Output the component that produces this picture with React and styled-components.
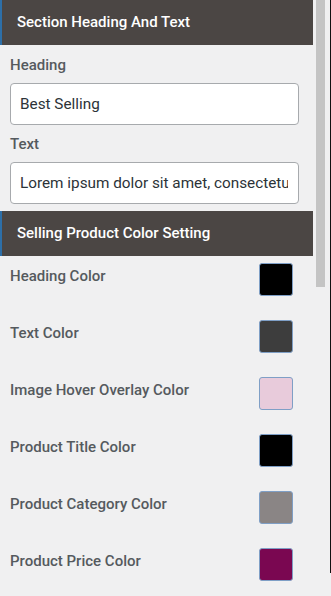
import React from 'react';
import styled, { createGlobalStyle } from 'styled-components';

const GlobalStyle = createGlobalStyle`
    html, body {
        margin: 0;
        padding: 0;
        background: #f0f0f1;
        font-family: Roboto, 'Liberation Sans', sans-serif;
    }
`;

const FrameStyled = styled.div`
    display: flex;
    align-items: flex-start;
    width: 331px;
    height: 596px;
    overflow: hidden;
`;

const PanelStyled = styled.div`
    flex: 0 0 313px;
    display: flex;
    flex-direction: column;
`;

const ScrollTrack = styled.div`
    flex: 0 0 auto;
    width: 9px;
    height: 573px;
    padding: 0 5px 0 3px;
    border-right: 1px solid #111;
`;

const ScrollThumb = styled.div`
    height: 287px;
    background: #c4c4c4;
`;

const SectionHeader = styled.div`
    flex-shrink: 0;
    display: flex;
    align-items: center;
    height: 45px;
    padding: 0 0 1px 15px;
    box-sizing: border-box;
    background: #4b4644;
    border-left: 2px solid #2d6fa8;
    color: #fff;
    font-size: 15px;
    font-weight: 500;
`;

const FieldGroup = styled.div`
    flex-shrink: 0;
    padding: 0 14px 7px 10px;
`;

const FieldLabel = styled.div`
    font-size: 15px;
    line-height: 20px;
    font-weight: 500;
    color: #555a5e;
    margin: ${(p) => (p.$first ? '10px' : '9px')} 0 8px;
`;

const TextInput = styled.input`
    display: block;
    width: 100%;
    height: 42px;
    box-sizing: border-box;
    padding: 0 10px 0 9px;
    border: 1px solid #a7aaad;
    border-radius: 4px;
    background: #fff;
    font-family: Roboto, 'Liberation Sans', sans-serif;
    font-size: 15.3px;
    color: #2c3338;
    outline: none;
`;

const ColorList = styled.div`
    flex-shrink: 0;
    padding: 7px 20px 0 10px;
`;

const ColorRow = styled.div`
    display: flex;
    justify-content: space-between;
    align-items: flex-start;
    height: 57px;
`;

const ColorLabel = styled.span`
    margin-top: 3px;
    font-size: 15px;
    line-height: 20px;
    font-weight: 500;
    color: #555a5e;
`;

const Swatch = styled.div`
    width: 34px;
    height: 33px;
    box-sizing: border-box;
    border: 1px solid #7f9fc6;
    border-radius: 3px;
    background: ${(p) => p.$color};
`;

const colors = [
    { label: 'Heading Color', value: '#000000' },
    { label: 'Text Color', value: '#3d3d3d' },
    { label: 'Image Hover Overlay Color', value: '#e8cbdb' },
    { label: 'Product Title Color', value: '#000000' },
    { label: 'Product Category Color', value: '#8a8585' },
    { label: 'Product Price Color', value: '#7a0751' },
];

export default function App() {
    return (
        <>
            <GlobalStyle />
            <FrameStyled>
                <PanelStyled>
                    <SectionHeader>Section Heading And Text</SectionHeader>
                    <FieldGroup>
                        <FieldLabel $first>Heading</FieldLabel>
                        <TextInput readOnly value="Best Selling" />
                        <FieldLabel>Text</FieldLabel>
                        <TextInput
                            readOnly
                            value="Lorem ipsum dolor sit amet, consectetur adipiscing elit"
                        />
                    </FieldGroup>
                    <SectionHeader>Selling Product Color Setting</SectionHeader>
                    <ColorList>
                        {colors.map((c) => (
                            <ColorRow key={c.label}>
                                <ColorLabel>{c.label}</ColorLabel>
                                <Swatch $color={c.value} />
                            </ColorRow>
                        ))}
                    </ColorList>
                </PanelStyled>
                <ScrollTrack>
                    <ScrollThumb />
                </ScrollTrack>
            </FrameStyled>
        </>
    );
}
